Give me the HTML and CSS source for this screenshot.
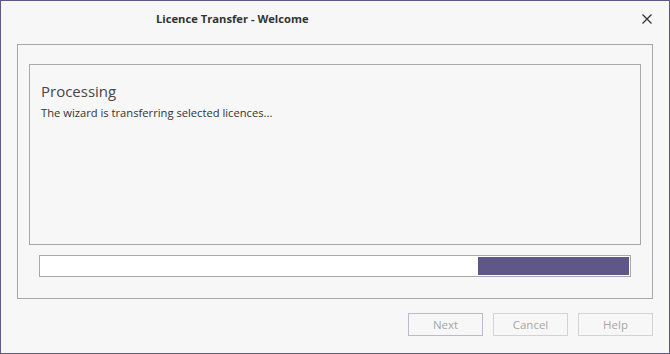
FILE: index.html
```html
<!DOCTYPE html>
<html lang="en">
<head>
    <meta charset="UTF-8">
    <title>Licence Transfer - Welcome</title>
    <link rel="stylesheet" href="styles.css">
</head>
<body>
    <div class="window">
        <div class="titlebar">
            <span class="title">Licence Transfer - Welcome</span>
            <span class="close">
                <svg width="10" height="10" viewBox="0 0 10 10">
                    <path d="M0.5 0.5 L9.5 9.5 M9.5 0.5 L0.5 9.5" stroke="#333" stroke-width="1.3"/>
                </svg>
            </span>
        </div>

        <div class="group">
            <div class="page">
                <div class="heading">Processing</div>
                <div class="text">The wizard is transferring selected licences...</div>
            </div>
            <!-- progress bar, fill is the moving block -->
            <div class="progress">
                <div class="fill"></div>
            </div>
        </div>

        <div class="buttons">
            <button class="btn btn-next">Next</button>
            <button class="btn">Cancel</button>
            <button class="btn">Help</button>
        </div>
    </div>
</body>
</html>
```

FILE: styles.css
```css
body {
    margin: 0;
    font-family: "Open Sans", "Noto Sans", sans-serif;
    background: #f7f7f7;
}

.window {
    box-sizing: border-box;
    width: 670px;
    height: 354px;
    border: 1px solid #5f5787;
    background: #f7f7f7;
}

.titlebar {
    height: 43px;
    display: flex;
    align-items: center;
    justify-content: space-between;
    padding: 0 17px 0 155px;
    box-sizing: border-box;
}

.title {
    font-size: 11.2px;
    font-weight: 700;
    color: #333;
    margin-top: -8px;
}

.close {
    display: flex;
    margin-top: -8px;
}

.group {
    margin: 0 16px;
    border: 1px solid #a8a8a8;
    padding: 19px 11px 21px 11px;
}

.page {
    height: 181px;
    border: 1px solid #a8a8a8;
    padding: 15px 11px;
    box-sizing: border-box;
}

.heading {
    font-size: 15px;
    font-weight: 400;
    color: #474747;
    line-height: 22px;
}

.text {
    font-size: 11.2px;
    color: #333;
    margin-top: 3px;
}

.progress {
    margin: 10px 10px 0 10px;
    height: 22px;
    box-sizing: border-box;
    border: 1px solid #a8a8a8;
    background: #fff;
    padding: 1px;
    display: flex;
    justify-content: flex-end;
}

.fill {
    width: 151px;
    background: #5e5787;
}

.buttons {
    display: flex;
    justify-content: flex-end;
    gap: 10px;
    margin: 14px 16px 0 0;
}

.btn {
    width: 75px;
    height: 23px;
    border: 1px solid #d3d3d3;
    background: #f7f7f7;
    color: #a6a6a6;
    font-family: "Open Sans", "Noto Sans", sans-serif;
    font-size: 11.5px;
    padding: 0;
}

.btn-next {
    border-color: #bdb8d2;
}
```
